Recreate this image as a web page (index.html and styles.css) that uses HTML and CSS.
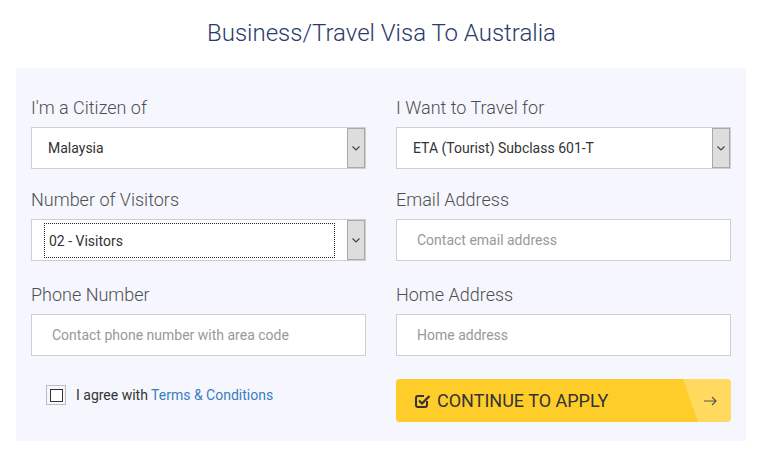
FILE: index.html
```html
<!DOCTYPE html>
<html lang="en">
<head>
<meta charset="utf-8">
<title>Business/Travel Visa To Australia</title>
<link rel="stylesheet" href="styles.css">
</head>
<body>
<h1 class="title">Business/Travel Visa To Australia</h1>
<form class="panel">
  <div class="field">
    <label class="label">I'm a Citizen of</label>
    <div class="select">
      <span class="value">Malaysia</span>
      <span class="arrow"><svg width="8" height="5" viewBox="0 0 8 5"><polyline points="0.5,0.5 4,4 7.5,0.5" fill="none" stroke="#444" stroke-width="1.2"/></svg></span>
    </div>
  </div>
  <div class="field">
    <label class="label">I Want to Travel for</label>
    <div class="select">
      <span class="value">ETA (Tourist) Subclass 601-T</span>
      <span class="arrow"><svg width="8" height="5" viewBox="0 0 8 5"><polyline points="0.5,0.5 4,4 7.5,0.5" fill="none" stroke="#444" stroke-width="1.2"/></svg></span>
    </div>
  </div>
  <div class="field row2">
    <label class="label">Number of Visitors</label>
    <div class="select">
      <span class="value focused">02 - Visitors</span>
      <span class="arrow"><svg width="8" height="5" viewBox="0 0 8 5"><polyline points="0.5,0.5 4,4 7.5,0.5" fill="none" stroke="#444" stroke-width="1.2"/></svg></span>
    </div>
  </div>
  <div class="field row2">
    <label class="label">Email Address</label>
    <div class="input"><span class="placeholder">Contact email address</span></div>
  </div>
  <div class="field row3">
    <label class="label">Phone Number</label>
    <div class="input"><span class="placeholder">Contact phone number with area code</span></div>
  </div>
  <div class="field row3">
    <label class="label">Home Address</label>
    <div class="input"><span class="placeholder">Home address</span></div>
  </div>
  <div class="agree">
    <span class="checkbox"><span class="checkbox-inner"></span></span>
    <span class="agree-text">I agree with <a class="link" href="#">Terms &amp; Conditions</a></span>
  </div>
  <div class="button">
    <span class="button-main">
      <svg class="check-icon" width="16" height="15" viewBox="0 0 16 15">
        <path d="M12 8 V12 a2 2 0 0 1 -2 2 H3 a2 2 0 0 1 -2 -2 V5 a2 2 0 0 1 2 -2 H9" fill="none" stroke="#333" stroke-width="2"/>
        <polyline points="4,7.5 7,10.5 14.5,3" fill="none" stroke="#333" stroke-width="2.2"/>
      </svg>
      <span class="button-text">CONTINUE TO APPLY</span>
    </span>
    <span class="button-end">
      <svg width="13" height="10" viewBox="0 0 13 10"><path d="M0 5 H12 M8 1 L12 5 L8 9" fill="none" stroke="#555" stroke-width="1.2"/></svg>
    </span>
  </div>
</form>
</body>
</html>
```

FILE: styles.css
```css
* { box-sizing: border-box; }

body {
  margin: 0;
  background: #ffffff;
  font-family: Roboto, "Liberation Sans", Arial, sans-serif;
  color: #333;
}

.title {
  margin: 0;
  padding-top: 18px;
  height: 68px;
  font-weight: 300;
  font-size: 24px;
  line-height: 30px;
  text-align: center;
  color: #2b3a6c;
}

.panel {
  margin: 0 17px 0 16px;
  width: 730px;
  background: #f5f6fe;
  padding: 29px 15px 19px;
  display: grid;
  grid-template-columns: 335px 335px;
  column-gap: 30px;
}

.field {
  display: flex;
  flex-direction: column;
}

.row2 { margin-top: 20px; }
.row3 { margin-top: 23px; }

.label {
  font-weight: 300;
  font-size: 18px;
  line-height: 22px;
  color: #4f4f4f;
  margin-bottom: 8px;
}

.select,
.input {
  height: 42px;
  background: #fff;
  border: 1px solid #cfcfcf;
  display: flex;
  align-items: stretch;
  font-size: 14px;
}

.value {
  flex: 1;
  display: flex;
  align-items: center;
  padding-left: 16px;
  color: #333;
}

.value.focused {
  margin: 3px 12px 2px 12px;
  padding-left: 4px;
  border: 1px dotted #222;
}

.arrow {
  width: 18px;
  background: #dddddd;
  border: 1px solid #a8a8a8;
  display: flex;
  align-items: center;
  justify-content: center;
}

.placeholder {
  display: flex;
  align-items: center;
  padding-left: 20px;
  color: #999;
}

.agree {
  margin-top: 29px;
  padding-left: 15px;
  display: flex;
  align-items: flex-start;
  gap: 10px;
  height: 20px;
}

.checkbox {
  width: 20px;
  height: 20px;
  border: 1px solid #bdbdbd;
  display: flex;
  align-items: center;
  justify-content: center;
}

.checkbox-inner {
  width: 13px;
  height: 13px;
  border: 1px solid #333;
  background: #fff;
}

.agree-text {
  font-size: 14px;
  line-height: 20px;
  color: #333;
}

.link {
  color: #3b7cbf;
  text-decoration: none;
}

.button {
  margin-top: 23px;
  height: 43px;
  border-radius: 4px;
  background: #ffda5e;
  display: flex;
  overflow: hidden;
}

.button-main {
  width: 302px;
  display: flex;
  align-items: center;
  gap: 6px;
  padding-left: 19px;
  background: #ffcd2a;
  clip-path: polygon(0 0, 287px 0, 302px 100%, 0 100%);
}

.check-icon { flex: none; }

.button-text {
  font-size: 18px;
  color: #333;
}

.button-end {
  flex: 1;
  display: flex;
  align-items: center;
  padding-left: 6px;
}
```
